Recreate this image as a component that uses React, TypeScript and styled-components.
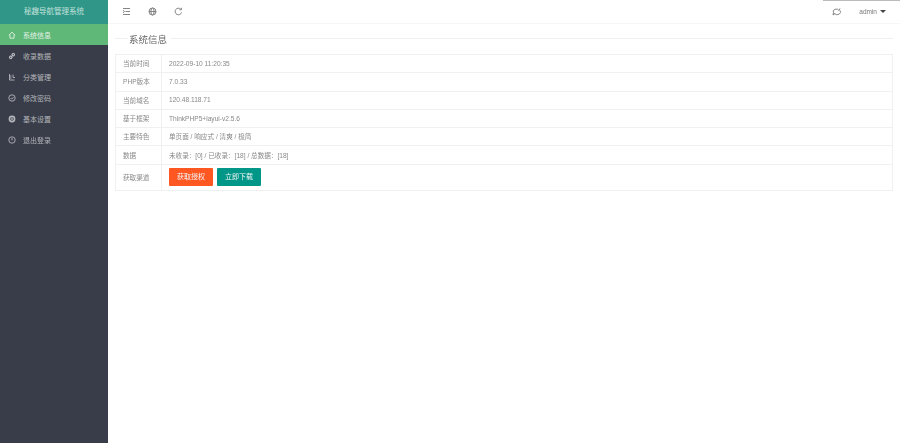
import React, { FC } from "react";
import styled, { createGlobalStyle } from "styled-components";

const GlobalStyle = createGlobalStyle`
  html, body { margin: 0; padding: 0; height: 100%; background: #fff; }
  #root { height: 100%; }
  * { box-sizing: border-box; }
  body { font-family: "Liberation Sans", "Noto Sans CJK SC", sans-serif; overflow: hidden; }
`;

const Page = styled.div`
  display: flex;
  width: 900px;
  height: 443px;
  filter: blur(0.3px);
`;

const Sidebar = styled.aside`
  width: 108px;
  flex: none;
  background: #393d49;
`;

const Logo = styled.div`
  height: 23.5px;
  background: #2f9688;
  color: #c4e2dc;
  font-size: 7.5px;
  line-height: 24px;
  text-align: center;
`;

const MenuItem = styled.div<{ $active?: boolean }>`
  height: 21px;
  display: flex;
  align-items: center;
  gap: 7px;
  padding: 1px 0 0 8px;
  font-size: 7px;
  color: ${(p) => (p.$active ? "#e4f3e8" : "#b4b6bb")};
  background: ${(p) => (p.$active ? "#5fb878" : "transparent")};
`;

const Glyph = styled.svg`
  width: 8px;
  height: 8px;
  flex: none;
  fill: none;
  stroke: currentColor;
  stroke-width: 0.9;
`;

const Main = styled.main`
  flex: 1;
  min-width: 0;
  display: flex;
  flex-direction: column;
`;

const TopBar = styled.header`
  height: 24px;
  position: relative;
  display: flex;
  align-items: center;
  padding: 0 0 0 14px;
  gap: 17px;
  border-bottom: 1px solid #f6f6f6;
  color: #777;
`;

const TopIcon = styled.svg`
  width: 9px;
  height: 9px;
  fill: none;
  stroke: currentColor;
  stroke-width: 0.9;
`;

const TopRight = styled.div`
  margin-left: auto;
  display: flex;
  align-items: center;
  gap: 18px;
  padding-right: 14px;
  font-size: 6.5px;
  color: #777;
`;

const Caret = styled.span`
  display: inline-block;
  margin-left: 3px;
  border-style: solid;
  border-width: 3px 3px 0;
  border-color: #444 transparent transparent;
  vertical-align: 1px;
`;

const TopLine = styled.div`
  position: absolute;
  top: 0;
  right: 0;
  width: 77px;
  height: 1px;
  background: #bbb;
`;

const Content = styled.section`
  padding: 7px 7px 0;
`;

const Legend = styled.div`
  display: flex;
  align-items: center;
  height: 15px;
  margin-bottom: 8px;
  color: #666;
  font-size: 9.5px;
  &::before {
    content: "";
    width: 13px;
    border-top: 1px solid #f0f0f0;
    margin-right: 1px;
  }
  &::after {
    content: "";
    flex: 1;
    border-top: 1px solid #f0f0f0;
  }
`;

const LegendText = styled.span`
  padding: 0 4px 0 0;
`;

const Table = styled.table`
  width: 778px;
  border-collapse: collapse;
  font-size: 6.6px;
  color: #888;
  table-layout: fixed;
`;

const Row = styled.tr`
  height: 18.3px;
`;

const ActionRow = styled.tr`
  height: 26px;
`;

const Th = styled.td`
  width: 46px;
  padding: 0 0 1px 7px;
  border: 1px solid #f0f0f0;
  white-space: nowrap;
`;

const Td = styled.td`
  padding: 0 0 1px 7px;
  border: 1px solid #f0f0f0;
  white-space: nowrap;
`;

const Actions = styled.div`
  display: flex;
  gap: 4px;
`;

const Btn = styled.div<{ $color: string }>`
  width: 44px;
  height: 18px;
  background: ${(p) => p.$color};
  color: #f4f4f4;
  font-size: 7px;
  line-height: 18px;
  text-align: center;
  border-radius: 1px;
`;

const menu: { label: string; icon: React.ReactNode }[] = [
  { label: "系统信息", icon: <path d="M0.8 4.3 4 1.2l3.2 3.1M2 3.6v3.6h4V3.6" /> },
  { label: "收录数据", icon: <path d="M3 5 5 3M2.8 3.6 1.6 4.8a1.2 1.2 0 0 0 1.6 1.6l1.2-1.2M3.6 2.8l1.2-1.2a1.2 1.2 0 0 1 1.6 1.6L5.2 4.4" strokeWidth="1.2" /> },
  { label: "分类管理", icon: <path d="M1.5 1v6h5M1.5 3h2M1.5 5h2M5 1.5v3h2" /> },
  { label: "修改密码", icon: <><circle cx="4" cy="4" r="3.2" /><path d="M2.5 4 3.7 5.2 5.6 3" /></> },
  { label: "基本设置", icon: <><circle cx="4" cy="4" r="2.6" strokeWidth="1.6" /><circle cx="4" cy="4" r="0.7" /></> },
  { label: "退出登录", icon: <><circle cx="4" cy="4" r="3.2" /><path d="M4 2v2.4" /></> },
];

const rows: [string, string][] = [
  ["当前时间", "2022-09-10 11:20:35"],
  ["PHP版本", "7.0.33"],
  ["当前域名", "120.48.118.71"],
  ["基于框架", "ThinkPHP5+layui-v2.5.6"],
  ["主要特色", "单页面 / 响应式 / 清爽 / 极简"],
  ["数据", "未收录：[0] / 已收录：[18] / 总数据：[18]"],
];

const App: FC = () => (
  <Page>
    <GlobalStyle />
    <Sidebar>
      <Logo>秘趣导航管理系统</Logo>
      {menu.map((item, index) => (
        <MenuItem key={item.label} $active={index === 0}>
          <Glyph viewBox="0 0 8 8">{item.icon}</Glyph>
          {item.label}
        </MenuItem>
      ))}
    </Sidebar>
    <Main>
      <TopBar>
        <TopLine />
        <TopIcon viewBox="0 0 9 9"><path d="M1 1.5h7M3.5 4.5H8M1 7.5h7M1 3.2 2.5 4.5 1 5.8" /></TopIcon>
        <TopIcon viewBox="0 0 9 9"><circle cx="4.5" cy="4.5" r="3.5" /><ellipse cx="4.5" cy="4.5" rx="1.6" ry="3.5" /><path d="M1 4.5h7" /></TopIcon>
        <TopIcon viewBox="0 0 9 9"><path d="M7.6 5.4A3.3 3.3 0 1 1 6.8 2.2M7.4 0.8v2h-2" /></TopIcon>
        <TopRight>
          <TopIcon viewBox="0 0 9 9"><path d="M1.5 5.5a3 2.4 0 0 1 5.5-2M8 3.5a3 2.4 0 0 1-5.5 3M1.5 5.5 1 8l2-1.4M7 3.5 8 1.5" /></TopIcon>
          <span>admin<Caret /></span>
        </TopRight>
      </TopBar>
      <Content>
        <Legend><LegendText>系统信息</LegendText></Legend>
        <Table>
          <tbody>
            {rows.map(([name, value]) => (
              <Row key={name}>
                <Th>{name}</Th>
                <Td>{value}</Td>
              </Row>
            ))}
            <ActionRow>
              <Th>获取渠道</Th>
              <Td>
                <Actions>
                  <Btn $color="#ff5722">获取授权</Btn>
                  <Btn $color="#009688">立即下载</Btn>
                </Actions>
              </Td>
            </ActionRow>
          </tbody>
        </Table>
      </Content>
    </Main>
  </Page>
);

export default App;
